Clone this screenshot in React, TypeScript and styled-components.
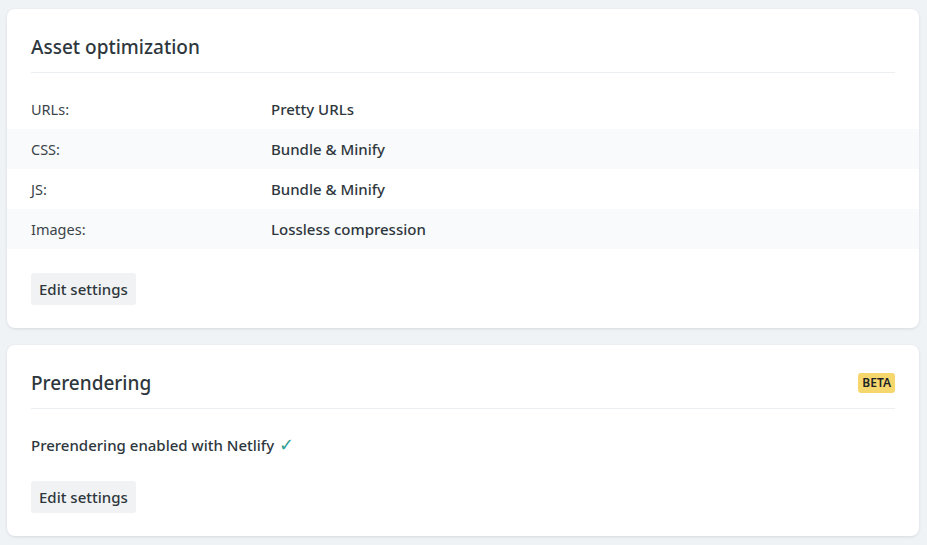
import React from "react";
import styled, { createGlobalStyle } from "styled-components";

const GlobalStyle = createGlobalStyle`
  html, body { margin: 0; padding: 0; background: #f0f3f6; }
  body { font-family: "Noto Sans", "Open Sans", sans-serif; color: #2e373d; }
  * { box-sizing: border-box; }
`;

const Page = styled.div`
  display: flex;
  flex-direction: column;
  gap: 17px;
  padding: 9px 8px 0 7px;
  min-height: 545px;
`;

const Card = styled.section`
  background: #ffffff;
  border-radius: 8px;
  box-shadow: 0 1px 3px rgba(30, 45, 60, 0.12);
  padding: 24px 0 23px;
`;

const Header = styled.div`
  display: flex;
  align-items: center;
  justify-content: space-between;
  margin: 0 24px;
  padding-bottom: 11px;
  border-bottom: 1px solid #eceff1;
`;

const Title = styled.h2`
  margin: 0;
  font-size: 19px;
  line-height: 28px;
  font-weight: 500;
  color: #2e373d;
`;

const Badge = styled.span`
  background: #f5d76e;
  color: #1f2326;
  font-size: 12px;
  font-weight: 600;
  line-height: 20px;
  padding: 0 4px;
  border-radius: 3px;
`;

const Rows = styled.div`
  margin-top: 16px;
  display: flex;
  flex-direction: column;
`;

const Row = styled.div<{ $striped?: boolean }>`
  display: grid;
  grid-template-columns: 240px 1fr;
  align-items: center;
  height: 40px;
  padding: 0 24px;
  background: ${(p) => (p.$striped ? "#f9fafb" : "transparent")};
  font-size: 14.5px;
`;

const Label = styled.span`
  color: #3b4449;
  font-weight: 400;
`;

const Value = styled.span`
  color: #2e373d;
  font-weight: 500;
  font-size: 15px;
`;

const Text = styled.p`
  margin: 24px 24px 0;
  line-height: 24px;
  font-size: 15px;
  font-weight: 500;
  color: #2e373d;
`;

const Check = styled.span`
  color: #2f9f95;
  font-weight: 400;
  font-size: 18px;
  line-height: 20px;
  margin-left: 5px;
`;

const Footer = styled.div`
  margin: 24px 24px 0;
`;

const Button = styled.button`
  font-family: inherit;
  font-size: 15px;
  font-weight: 500;
  color: #2e373d;
  background: #f1f2f4;
  border: none;
  border-radius: 3px;
  height: 32px;
  padding: 0 8px;
  cursor: pointer;
`;

const rows = [
  { label: "URLs:", value: "Pretty URLs" },
  { label: "CSS:", value: "Bundle & Minify" },
  { label: "JS:", value: "Bundle & Minify" },
  { label: "Images:", value: "Lossless compression" },
];

export default function App() {
  return (
    <>
      <GlobalStyle />
      <Page>
        <Card>
          <Header>
            <Title>Asset optimization</Title>
          </Header>
          <Rows>
            {rows.map((r, i) => (
              <Row key={r.label} $striped={i % 2 === 1}>
                <Label>{r.label}</Label>
                <Value>{r.value}</Value>
              </Row>
            ))}
          </Rows>
          <Footer>
            <Button>Edit settings</Button>
          </Footer>
        </Card>
        <Card>
          <Header>
            <Title>Prerendering</Title>
            <Badge>BETA</Badge>
          </Header>
          <Text>
            Prerendering enabled with Netlify<Check>✓</Check>
          </Text>
          <Footer>
            <Button>Edit settings</Button>
          </Footer>
        </Card>
      </Page>
    </>
  );
}
